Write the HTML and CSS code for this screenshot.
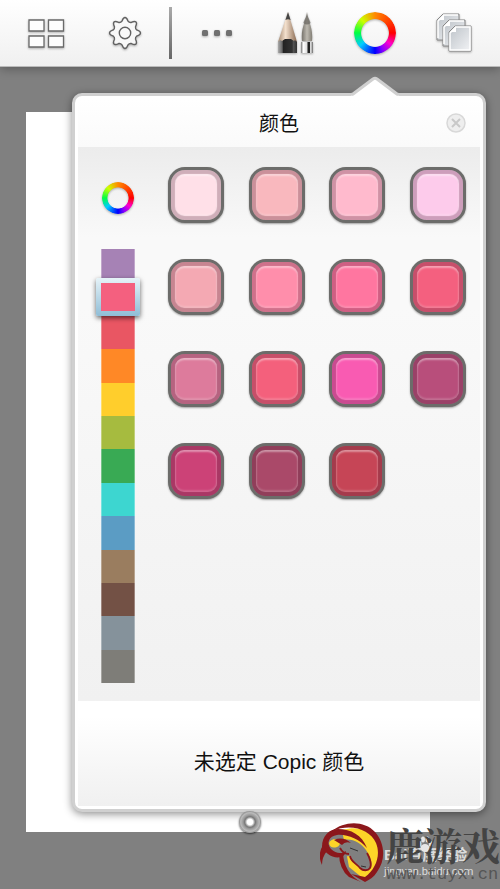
FILE: index.html
```html
<!DOCTYPE html>
<html lang="zh-Hans">
<head>
<meta charset="UTF-8">
<title>颜色</title>
<meta name="viewport" content="width=device-width, initial-scale=1">
<link rel="stylesheet" href="styles.css">
</head>
<body>

<header class="toolbar">
  <button class="tool" aria-label="图库">
    <svg width="38" height="32" viewBox="0 0 38 32" fill="#fdfdfd" stroke="#6a6a6a" stroke-width="1.3">
      <path d="M2 3h15v11H2zM21.500 3h15v11h-15zM2 19h15v11H2zM21.500 19h15v11h-15z"/>
    </svg>
  </button>
  <button class="tool" aria-label="设置">
    <svg width="34" height="34" viewBox="-17 -17 34 34" fill="#f8f8f8" stroke="#626262" stroke-width="1.4" stroke-linejoin="round">
      <path d="M-3-11.800C-2.200-14-1.800-15.500 0-15.500S2.200-14 3-11.800Q4.200-10.200 6.200-10.500C8.300-11.500 9.700-12.200 11-11S11.500-8.300 10.500-6.200Q10.200-4.200 11.800-3C14-2.200 15.500-1.800 15.500 0S14 2.200 11.800 3Q10.200 4.200 10.500 6.200C11.500 8.300 12.200 9.700 11 11S8.300 11.500 6.200 10.500Q4.200 10.200 3 11.800C2.200 14 1.800 15.500 0 15.500S-2.200 14-3 11.800Q-4.200 10.200-6.200 10.500C-8.300 11.500-9.700 12.200-11 11S-11.500 8.300-10.500 6.200Q-10.200 4.200-11.800 3C-14 2.200-15.500 1.800-15.500 0S-14-2.200-11.800-3Q-10.200-4.200-10.500-6.200C-11.500-8.300-12.200-9.700-11-11S-8.300-11.500-6.200-10.500Q-4.200-10.200-3-11.800z"/>
      <circle r="5.700"/>
    </svg>
  </button>
  <span class="divider"></span>
  <button class="tool" aria-label="更多">
    <svg width="32" height="8" viewBox="0 0 32 8" fill="#707070">
      <rect x="1" y="1" width="6" height="6" rx="1.500"/>
      <rect x="13" y="1" width="6" height="6" rx="1.500"/>
      <rect x="25" y="1" width="6" height="6" rx="1.500"/>
    </svg>
  </button>
  <button class="tool" aria-label="画笔">
    <svg width="40" height="44" viewBox="0 0 40 44">
      <defs>
        <linearGradient id="wood"><stop offset="0" stop-color="#a58a72"/><stop offset=".4" stop-color="#f3e0cd"/><stop offset="1" stop-color="#8a6a52"/></linearGradient>
        <linearGradient id="hair"><stop offset="0" stop-color="#77736c"/><stop offset=".5" stop-color="#bdb9b0"/><stop offset="1" stop-color="#827e75"/></linearGradient>
        <linearGradient id="lead"><stop offset="0" stop-color="#aaa"/><stop offset=".22" stop-color="#666"/><stop offset=".28" stop-color="#222"/><stop offset=".75" stop-color="#333"/><stop offset=".8" stop-color="#555"/><stop offset="1" stop-color="#333"/></linearGradient>
        <linearGradient id="ferrule"><stop offset="0" stop-color="#777"/><stop offset=".2" stop-color="#fff"/><stop offset=".5" stop-color="#ddd"/><stop offset=".58" stop-color="#222"/><stop offset=".72" stop-color="#222"/><stop offset=".8" stop-color="#eee"/><stop offset="1" stop-color="#666"/></linearGradient>
      </defs>
      <path d="M12 1L21 31v11H2V31z" fill="url(#wood)"/>
      <path d="M12 1l2.600 8q-2.600-1.500-5.200 0z" fill="#444"/>
      <path d="M2 31q2-3 4-1l3-2h6l3 2q1-2 3 1v11H2z" fill="url(#lead)"/>
      <path d="M31 1c.5 9 6.500 15 5 29H26c-1.500-14 4.500-20 5-29z" fill="url(#hair)"/>
      <path d="M31 1c.4 5 2.500 7 3.600 11q-3.600 3-7.200 0C28.500 8 30.600 6 31 1z" fill="#67645e" opacity=".7"/>
      <path d="M25 31h12v11H25z" fill="url(#ferrule)"/>
    </svg>
  </button>
  <button class="tool" aria-label="颜色"><span class="wheel wheel-large"></span></button>
  <button class="tool" aria-label="图层">
    <svg width="36" height="40" viewBox="0 0 36 40">
      <defs>
        <linearGradient id="page" x2="1" y2="1"><stop offset="0" stop-color="#bcc2c8"/><stop offset="1" stop-color="#f3f4f6"/></linearGradient>
      </defs>
      <g fill="url(#page)" stroke="#888">
        <path d="M7 1h16v26H1V7z"/><path d="M13 7h16v26H7V13z"/><path d="M19 13h16v25H13V19z"/>
      </g>
      <g fill="none" stroke="#fff" stroke-width="1.500">
        <path d="M22 2H8L2 8v17M28 8H14l-6 6v17M20 14h14v23H14V20z"/>
      </g>
      <path d="M8 1v6H2zM14 7v6H8zM20 13v6h-6z" fill="#fff"/>
    </svg>
  </button>
</header>

<main class="workspace">
  <div class="canvas"></div>

  <section class="popover">
    <svg class="popover-arrow" width="48" height="22" viewBox="0 0 48 22">
      <path d="M0 18.500L2 18 22 3q2-1.500 4 0L46 18l2 .500V22H0z" fill="#fff"/>
      <path d="M0 18.500L2 18 22 3q2-1.500 4 0L46 18l2 .500" fill="none" stroke="#d0d0d0" stroke-width="3"/>
    </svg>
    <div class="popover-header">
      <h1 class="popover-title">颜色</h1>
      <button class="close-btn" aria-label="关闭">
        <svg width="20" height="20" viewBox="0 0 20 20" fill="#eee" stroke="#d8d8d8" stroke-width="1.500">
          <circle cx="10" cy="10" r="9"/><path d="M6 6l8 8M14 6l-8 8" stroke="#c8c8c8" stroke-width="2"/>
        </svg>
      </button>
    </div>

    <div class="palette">
      <div class="hues">
        <button class="wheel-btn" aria-label="色轮"><span class="wheel"></span></button>
        <div class="hue-strip">
          <button class="hue violet" aria-label="紫"></button>
          <button class="hue rose selected" aria-label="玫红"></button>
          <button class="hue red" aria-label="红"></button>
          <button class="hue orange" aria-label="橙"></button>
          <button class="hue yellow" aria-label="黄"></button>
          <button class="hue olive" aria-label="黄绿"></button>
          <button class="hue green" aria-label="绿"></button>
          <button class="hue cyan" aria-label="青"></button>
          <button class="hue blue" aria-label="蓝"></button>
          <button class="hue tan" aria-label="土色"></button>
          <button class="hue brown" aria-label="棕"></button>
          <button class="hue slate" aria-label="冷灰"></button>
          <button class="hue gray" aria-label="暖灰"></button>
        </div>
      </div>
      <div class="swatches">
        <button class="swatch s1" aria-label="颜色 1"></button>
        <button class="swatch s2" aria-label="颜色 2"></button>
        <button class="swatch s3" aria-label="颜色 3"></button>
        <button class="swatch s4" aria-label="颜色 4"></button>
        <button class="swatch s5" aria-label="颜色 5"></button>
        <button class="swatch s6" aria-label="颜色 6"></button>
        <button class="swatch s7" aria-label="颜色 7"></button>
        <button class="swatch s8" aria-label="颜色 8"></button>
        <button class="swatch s9" aria-label="颜色 9"></button>
        <button class="swatch s10" aria-label="颜色 10"></button>
        <button class="swatch s11" aria-label="颜色 11"></button>
        <button class="swatch s12" aria-label="颜色 12"></button>
        <button class="swatch s13" aria-label="颜色 13"></button>
        <button class="swatch s14" aria-label="颜色 14"></button>
        <button class="swatch s15" aria-label="颜色 15"></button>
      </div>
    </div>

    <div class="popover-footer">未选定 Copic 颜色</div>
  </section>

  <button class="puck" aria-label="工具环"></button>

  <div class="watermark">
    <svg class="deer" width="64" height="62" viewBox="0 0 64 62">
      <path d="M22 7C46 0 60 14 60 30 60 44 54 53 45 57L29 44z" fill="#fdd428"/>
      <path d="M12 8C24-2 44-3 55 9c10 11 11 28 2 40-3 5-8 8-12 10l-14-8 14 3c11-8 16-22 11-34C50 7 32 0 12 8z" fill="#8b171b"/>
      <path d="M19 18c12-4 21 1 27 9 5 8 7 14 4 19-4 3-9 1-12-3-4-4-8-5-8-10-7 2-10-7-11-15z" fill="#808080"/>
      <path d="M20 25c2 4 5 6 9 6M30 33c1 6 6 7 10 12 3 3 8 3 10 0s0-10-3-15" fill="none" stroke="#8b171b" stroke-width="1.800"/>
      <path d="M2 24C2 13 9 6 18 6c13 0 24 6 29 19-8-9-20-14-30-13-8 1-11 8-6 14 5 5 11 5 15 2-1 8-12 8-18 3-3-2-5-5-6-7z" fill="#8b171b"/>
      <path d="M9 20q3-6 12-3-1 6-4 7-7 2-8-4z" fill="#fdd428"/>
      <path d="M14 17q9-4 17 3-6-2-9 2z" fill="#8b171b"/>
      <path d="M3 22q-6 10-1 20 0-8 5-14zM19 30q0 16 10 24l12 5Q24 50 23 30z" fill="#8b171b"/>
      <path d="M30 25l8 3M41 43l5 1" stroke="#333" fill="none"/>
    </svg>
    <div class="source">
      <svg class="paw" width="16" height="16" viewBox="0 0 16 16" fill="#e6e6e6">
        <ellipse cx="2.500" cy="8" rx="2" ry="3"/><ellipse cx="6" cy="3.500" rx="2" ry="3"/><ellipse cx="10.500" cy="3.500" rx="2" ry="3"/><ellipse cx="13.800" cy="8" rx="2" ry="3"/><ellipse cx="8" cy="12" rx="4.500" ry="4"/>
      </svg>
      <span class="source-name">Bai百度经验</span>
      <span class="source-url">jingyan.baidu.com</span>
    </div>
    <div class="brand">
      <span class="brand-name">鹿游戏</span>
      <span class="brand-url">www.tuyx.cn</span>
    </div>
  </div>
</main>

</body>
</html>
```
FILE: styles.css
```css
* { box-sizing: border-box; }
body { margin: 0; min-height: 100vh; display: flex; flex-direction: column; background: #808080; font-family: "Liberation Sans", "Noto Sans CJK SC", sans-serif; color: #111; }
button { padding: 0; border: none; background: none; cursor: pointer; }
svg { display: block; }

/* top toolbar */
.toolbar { position: relative; display: flex; align-items: center; height: 67px; padding: 0 6px; background: linear-gradient(#fff, #f0f0f0); border-bottom: 1px solid #bbb; box-shadow: 0 2px 10px rgba(0,0,0,0.3); }
.tool { flex: 1; display: flex; justify-content: center; filter: drop-shadow(0 1px 1px rgba(0,0,0,0.3)); }
.divider { width: 3px; height: 52px; margin: 0 5px; background: linear-gradient(#aaa, #666); }

.wheel { display: block; width: 32px; height: 32px; border-radius: 50%; background: conic-gradient(#ff8a00, #f00 90deg, #f0c 125deg, #80f 155deg, #00f 180deg, #0cf 230deg, #0f4 270deg, #cf0 315deg, #ff8a00); -webkit-mask: radial-gradient(closest-side, transparent 64%, #000 68%); mask: radial-gradient(closest-side, transparent 64%, #000 68%); }
.wheel-large { width: 42px; height: 42px; }
.wheel-btn { filter: drop-shadow(0 1px 1px rgba(0,0,0,0.3)); }

/* drawing area */
.workspace { position: relative; flex: 1; display: flex; padding: 45px 70px 57px 26px; }
.canvas { flex: 1; background: #fff; }

.popover { position: absolute; top: 26px; right: 14px; bottom: 77px; left: 72px; display: flex; flex-direction: column; padding: 3px; border: 3px solid #d0d0d0; border-radius: 10px; background: #fff; box-shadow: 0 2px 9px rgba(0,0,0,0.45); }
.popover-arrow { position: absolute; top: -20px; right: 84px; }
.popover-header { position: relative; display: flex; align-items: center; justify-content: center; height: 48px; background: linear-gradient(#fff, #fafafa); }
.popover-title { margin: 0; padding-top: 2px; font-size: 20px; font-weight: 400; line-height: 28px; }
.close-btn { position: absolute; right: 14px; }

.palette { flex: 1; display: flex; padding: 20px 14px 18px 23px; background: linear-gradient(#ececec, #f9f9f9 90px, #f9f9f9 160px, #f1f1f1); }
.hues { display: flex; flex-direction: column; align-items: center; width: 34px; margin-right: 33px; padding-top: 15px; }
.hue-strip { flex: 1; display: flex; flex-direction: column; width: 34px; margin-top: 35px; }
.hue { position: relative; flex: 1; border-left: 1px solid rgba(255,255,255,0.3); border-right: 1px solid rgba(255,255,255,0.3); }
.violet { background: #a682b5; }
.rose { background: #f4607f; }
.red { background: #e95663; }
.orange { background: #ff8826; }
.yellow { background: #ffce2c; }
.olive { background: #a6bb3f; }
.green { background: #39aa54; }
.cyan { background: #3dd6d0; }
.blue { background: #5b9cc4; }
.tan { background: #9a7d5f; }
.brown { background: #735145; }
.slate { background: #85929b; }
.gray { background: #7e7d78; }

/* frame round the current hue */
.hue.selected::after { content: ""; position: absolute; z-index: 1; top: -4px; right: -6px; bottom: 0; left: -6px; border: 5px solid transparent; border-radius: 2px; background: linear-gradient(#f4607f, #f4607f) padding-box, linear-gradient(#e6f3f8, #8fbdd6) border-box; box-shadow: 0 2px 5px rgba(0,0,0,0.6); }

.swatches { flex: 1; display: grid; grid-template-columns: repeat(4, 56px); grid-auto-rows: 56px; justify-content: space-between; align-content: start; row-gap: 36px; }
.swatch { position: relative; border: 3px solid #6c6c6a; border-radius: 17px; box-shadow: 0 1px 2px rgba(0,0,0,0.35), inset 0 0 1px 4px rgba(70,30,50,0.26); }
.swatch::after { content: ""; position: absolute; top: 4px; right: 4px; bottom: 4px; left: 4px; border-radius: 9px; box-shadow: inset 0 2px 2px rgba(255,255,255,0.4), inset 0 -2px 2px rgba(255,255,255,0.15), inset 0 0 3px rgba(255,255,255,0.15); }
.s1 { background: #ffe0e8; }
.s2 { background: #f9b8be; }
.s3 { background: #ffbacd; }
.s4 { background: #fdcbeb; }
.s5 { background: #f4a9b3; }
.s6 { background: #ff8eab; }
.s7 { background: #ff76a0; }
.s8 { background: #f4607f; }
.s9 { background: #dd7b9c; }
.s10 { background: #f4607c; }
.s11 { background: #f95bb2; }
.s12 { background: #b84e7b; }
.s13 { background: #cc4277; }
.s14 { background: #aa4969; }
.s15 { background: #c64556; }

.popover-footer { display: flex; align-items: center; justify-content: center; height: 105px; padding-top: 13px; background: linear-gradient(#fff 15%, #f0f0f0); font-size: 21px; }

.puck { position: absolute; bottom: 56px; left: 50%; width: 22px; height: 22px; margin-left: -11px; border-radius: 50%; background: radial-gradient(#fff 18%, #777 34%, #999 44%, #bbb 60%, #888 72%); box-shadow: 0 1px 2px rgba(0,0,0,0.6); }

/* site marks in the corner */
.watermark { position: absolute; right: 0; bottom: 4px; width: 180px; height: 62px; }
.deer { position: absolute; top: 0; left: 0; }
.source { position: absolute; top: 22px; left: 64px; display: flex; flex-direction: column; color: #ddd; white-space: nowrap; }
.source-name { font-size: 15px; font-weight: 700; line-height: 20px; }
.source-url { font-family: Roboto, sans-serif; font-size: 11px; line-height: 14px; }
.paw { position: absolute; top: -9px; left: 33px; }
.brand { position: absolute; top: 0; left: 66px; display: flex; flex-direction: column; color: #444; white-space: nowrap; }
.brand-name { font-family: "Noto Serif CJK SC", "Noto Sans CJK SC", serif; font-size: 38px; font-weight: 700; line-height: 42px; }
.brand-url { font-family: "Liberation Mono", monospace; font-size: 17px; line-height: 20px; color: #555; }
```
